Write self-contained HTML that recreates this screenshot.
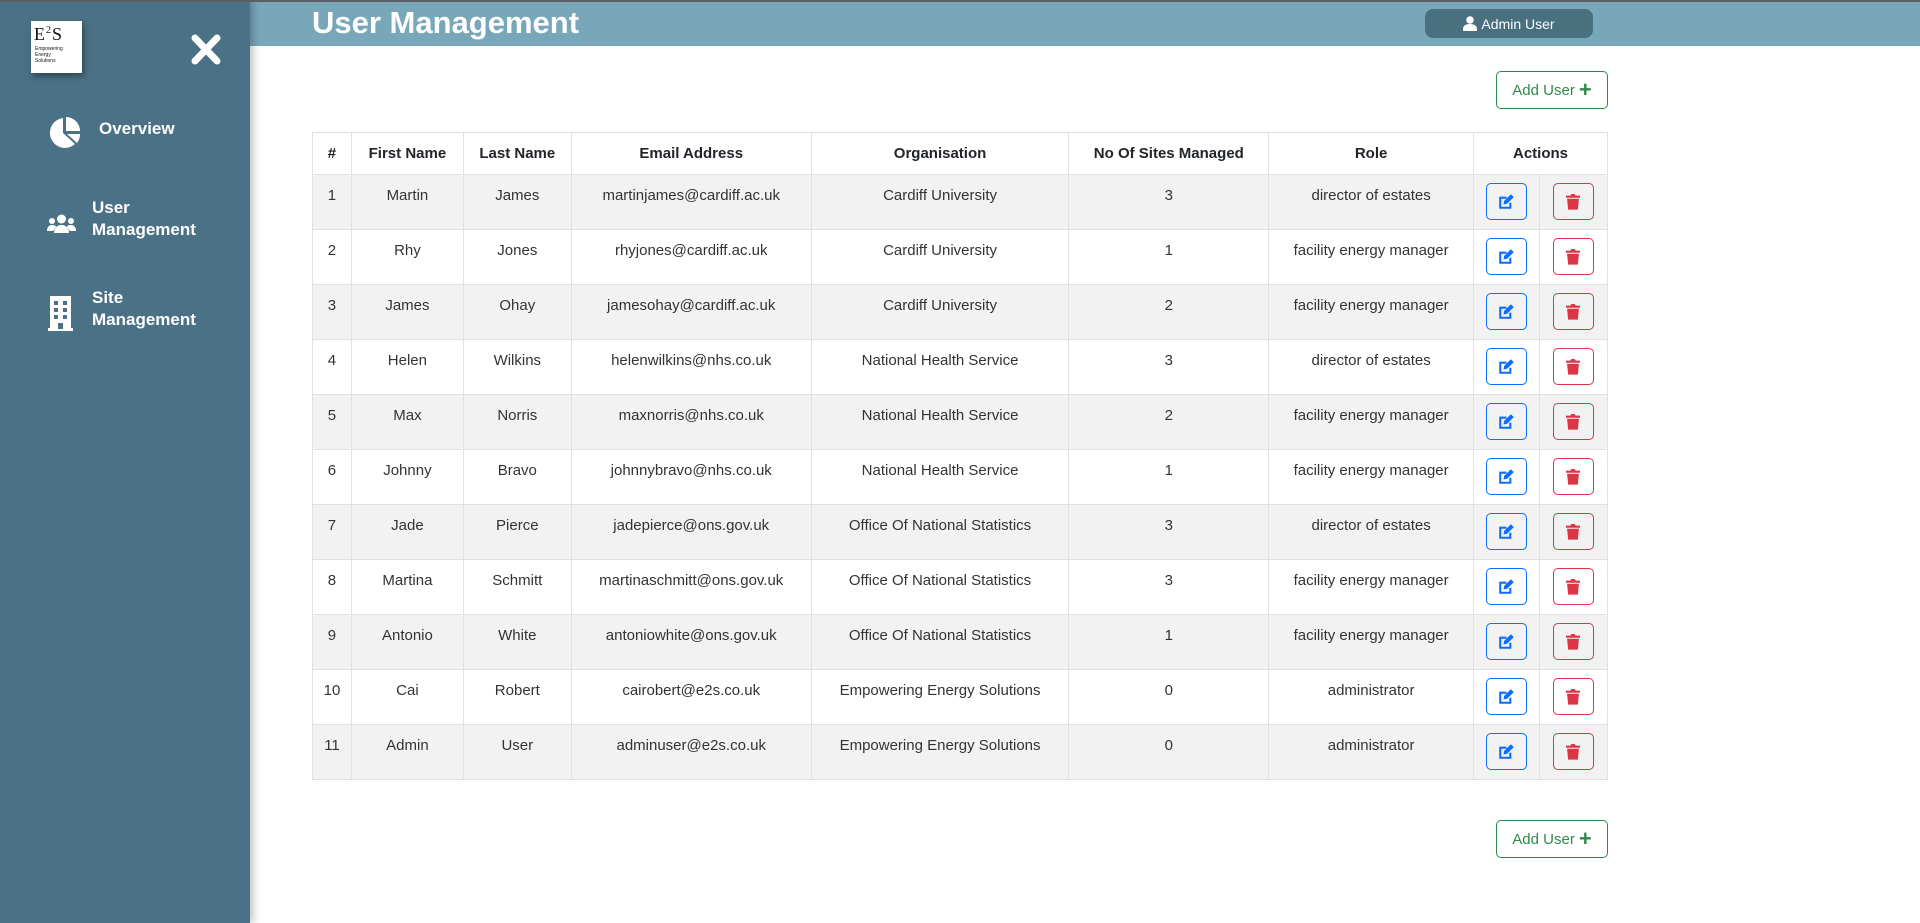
<!DOCTYPE html>
<html><head><style>
*{box-sizing:border-box;margin:0;padding:0}
body{width:1920px;height:923px;overflow:hidden;font-family:"Liberation Sans",sans-serif;background:#fff;position:relative;color:#212529}
.topline{position:absolute;left:0;top:0;width:1920px;height:2px;background:#5a5f63;z-index:5}
.side{position:absolute;left:0;top:0;width:250px;height:923px;background:#4a7185;box-shadow:3px 0 8px rgba(0,0,0,.25);z-index:3}
.head{position:absolute;left:250px;top:0;width:1670px;height:46px;background:#79a7ba}
.title{position:absolute;left:312px;top:5px;color:#fff;font-weight:bold;font-size:31px}
.admin{position:absolute;left:1425px;top:9px;width:168px;height:29px;background:#48707f;border-radius:8px;color:#fff;font-size:14px;display:flex;align-items:center;justify-content:center;gap:4px}
.logo{position:absolute;left:31px;top:21px;width:51px;height:52px;background:#fff;box-shadow:2px 3px 6px rgba(0,0,0,.4);font-family:"Liberation Serif",serif;color:#111}
.nav{position:absolute;color:#fff;font-weight:bold;font-size:17px;line-height:22px}
.addbtn{position:absolute;left:1496px;width:112px;height:38px;border:1px solid #2f8a4a;border-radius:5px;color:#2f8a4a;font-size:15px;display:flex;align-items:center;justify-content:center;gap:4px;background:#fff}
table{position:absolute;left:312px;top:132px;width:1296px;border-collapse:collapse;font-size:15px}
th,td{border:1px solid #dee2e6;text-align:center}
th{height:42px;font-weight:bold;font-size:15px}
td{height:55px;vertical-align:top;padding-top:12px;color:#333}
tr.s td{background:#f2f2f2}
td.b{padding-top:8px}
.eb,.db{display:inline-flex;width:41px;height:37px;border-radius:5px;align-items:center;justify-content:center;background:transparent}
.eb{border:1px solid #0d6efd}.db{border:1px solid #dc3545}
</style></head><body>
<div class="topline"></div>
<div class="head"></div>
<div class="title">User Management</div>
<div class="admin"><svg width="14" height="15" viewBox="0 0 14 15"><circle cx="7" cy="4" r="3.8" fill="#fff"/><path d="M0 15v-2c0-3 2.5-5 7-5s7 2 7 5v2z" fill="#fff"/></svg>Admin User</div>
<div class="side">
 <div class="logo"><div style="position:absolute;left:3px;top:3px;font-size:18px;letter-spacing:1px">E<sup style="font-size:10px">2</sup>S</div><div style="position:absolute;left:4px;top:25px;font-size:5px;line-height:6px;font-family:'Liberation Sans'">Empowering<br>Energy<br>Solutions</div></div>
 <svg style="position:absolute;left:190px;top:34px" width="32" height="31" viewBox="0 0 32 31"><path d="M5 4L27 27M27 4L5 27" stroke="#fff" stroke-width="7" stroke-linecap="round"/></svg>
 <svg style="position:absolute;left:48px;top:116px" width="34" height="34" viewBox="0 0 34 34"><path d="M15 2A15 15 0 1 0 27 28L15 17Z" fill="#fff"/><path d="M18 1A14 14 0 0 1 32 15H18Z" fill="#fff"/><path d="M19 18H32A14 14 0 0 1 29 27Z" fill="#fff"/></svg>
 <div class="nav" style="left:99px;top:118px">Overview</div>
 <svg style="position:absolute;left:47px;top:213px" width="29" height="22" viewBox="0 0 29 22"><circle cx="14.5" cy="6" r="4.5" fill="#fff"/><circle cx="5" cy="8" r="3" fill="#fff"/><circle cx="24" cy="8" r="3" fill="#fff"/><path d="M7 20c0-5 3-8 7.5-8s7.5 3 7.5 8z" fill="#fff"/><path d="M0 18c0-4 2-6 5-6s4 1 4 2l-3 4z M29 18c0-4-2-6-5-6s-4 1-4 2l3 4z" fill="#fff"/></svg>
 <div class="nav" style="left:92px;top:197px">User<br>Management</div>
 <svg style="position:absolute;left:48px;top:296px" width="25" height="35" viewBox="0 0 25 35"><path d="M2 0H23V32H25V35H0V32H2Z" fill="#fff"/><g fill="#4a7185"><rect x="6" y="5" width="4" height="4"/><rect x="15" y="5" width="4" height="4"/><rect x="6" y="12" width="4" height="4"/><rect x="15" y="12" width="4" height="4"/><rect x="6" y="19" width="4" height="4"/><rect x="15" y="19" width="4" height="4"/><rect x="10" y="27" width="5" height="6"/></g></svg>
 <div class="nav" style="left:92px;top:287px">Site<br>Management</div>
</div>
<div class="addbtn" style="top:71px">Add User <b style="font-size:22px;line-height:1">+</b></div>
<div class="addbtn" style="top:820px">Add User <b style="font-size:22px;line-height:1">+</b></div>
<table>
<colgroup><col style="width:39px"><col style="width:112px"><col style="width:108px"><col style="width:240px"><col style="width:258px"><col style="width:200px"><col style="width:205px"><col style="width:66px"><col style="width:68px"></colgroup>
<tr><th>#</th><th>First Name</th><th>Last Name</th><th>Email Address</th><th>Organisation</th><th>No Of Sites Managed</th><th>Role</th><th colspan="2">Actions</th></tr>
<tbody id="tb"></tbody>
</table>
<script>
var d=[["Martin","James","martinjames@cardiff.ac.uk","Cardiff University",3,"director of estates"],["Rhy","Jones","rhyjones@cardiff.ac.uk","Cardiff University",1,"facility energy manager"],["James","Ohay","jamesohay@cardiff.ac.uk","Cardiff University",2,"facility energy manager"],["Helen","Wilkins","helenwilkins@nhs.co.uk","National Health Service",3,"director of estates"],["Max","Norris","maxnorris@nhs.co.uk","National Health Service",2,"facility energy manager"],["Johnny","Bravo","johnnybravo@nhs.co.uk","National Health Service",1,"facility energy manager"],["Jade","Pierce","jadepierce@ons.gov.uk","Office Of National Statistics",3,"director of estates"],["Martina","Schmitt","martinaschmitt@ons.gov.uk","Office Of National Statistics",3,"facility energy manager"],["Antonio","White","antoniowhite@ons.gov.uk","Office Of National Statistics",1,"facility energy manager"],["Cai","Robert","cairobert@e2s.co.uk","Empowering Energy Solutions",0,"administrator"],["Admin","User","adminuser@e2s.co.uk","Empowering Energy Solutions",0,"administrator"]];
var e='<svg width="17" height="17" viewBox="0 0 14 14"><path d="M1 3h6v1.7H2.7v6.6h6.6V8H11v5H1z" fill="#0d6efd"/><path d="M4.5 9.5l.6-3 5.5-5.5 2.4 2.4-5.5 5.5z" fill="#0d6efd"/></svg>';
var t='<svg width="14" height="17" viewBox="0 0 13 15"><path d="M0 2h4l1-1.5h3L9 2h4v2H0z" fill="#dc3545"/><path d="M1 5h11l-1 10H2z" fill="#dc3545"/></svg>';
var h='';d.forEach(function(r,i){h+='<tr'+(i%2==0?' class="s"':'')+'><td>'+(i+1)+'</td><td>'+r[0]+'</td><td>'+r[1]+'</td><td>'+r[2]+'</td><td>'+r[3]+'</td><td>'+r[4]+'</td><td>'+r[5]+'</td><td class="b"><span class="eb">'+e+'</span></td><td class="b"><span class="db">'+t+'</span></td></tr>';});
document.getElementById('tb').innerHTML=h;
</script>
</body></html>
